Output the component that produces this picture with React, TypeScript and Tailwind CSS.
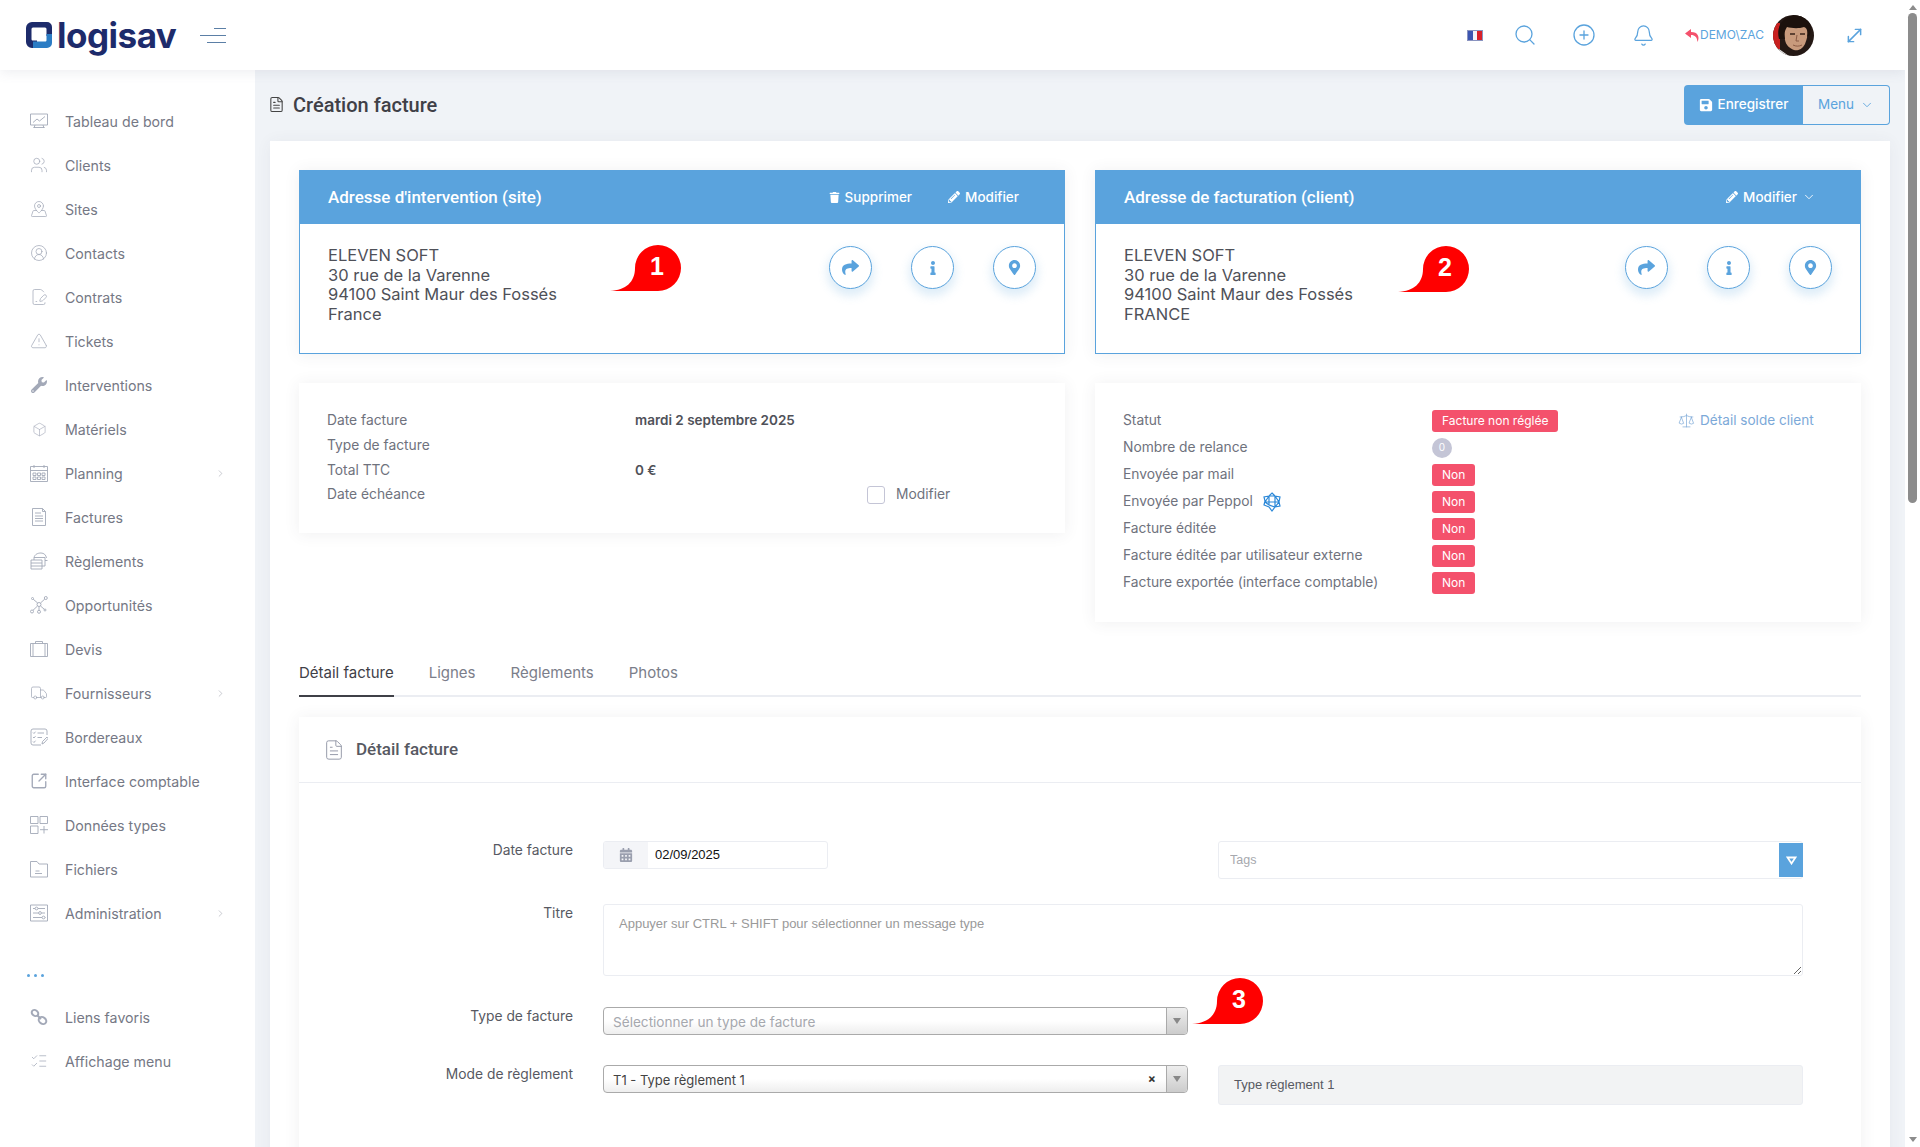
import type { ReactNode } from "react";
import {
  Bell,
  Box,
  ChevronDown,
  ChevronRight,
  CircleUserRound,
  FilePenLine,
  FileText,
  ListChecks,
  MapPinned,
  MoveDiagonal,
  PlusCircle,
  Scale,
  Search,
  SquareArrowOutUpRight,
  TriangleAlert,
  Truck,
  Users,
} from "lucide-react";
import {
  FaCalendarAlt,
  FaInfo,
  FaMapMarkerAlt,
  FaPencilAlt,
  FaSave,
  FaShare,
  FaTrash,
  FaWrench,
} from "react-icons/fa";

const Line = ({ children }: { children: ReactNode }) => (
  <svg width="18" height="18" viewBox="0 0 18 18" fill="none" stroke="#a3a9b8" strokeWidth="0.9">
    {children}
  </svg>
);

const lucideProps = { size: 20, strokeWidth: 1, color: "#a3a9b8" };

const NAV: { label: string; icon: ReactNode; sub?: boolean }[] = [
  {
    label: "Tableau de bord",
    icon: (
      <Line>
        <path d="M.5 2h17v11H.5zM3 10.5l4-3.5 2.500 2L15 4.500M5 13l-1 3M13 13l1 3M3.500 15.500h11" />
      </Line>
    ),
  },
  { label: "Clients", icon: <Users {...lucideProps} /> },
  { label: "Sites", icon: <MapPinned {...lucideProps} /> },
  { label: "Contacts", icon: <CircleUserRound {...lucideProps} /> },
  { label: "Contrats", icon: <FilePenLine {...lucideProps} /> },
  { label: "Tickets", icon: <TriangleAlert {...lucideProps} /> },
  { label: "Interventions", icon: <FaWrench size={16} color="#a3a9b8" /> },
  { label: "Matériels", icon: <Box size={15} strokeWidth={1} color="#a3a9b8" /> },
  {
    label: "Planning",
    sub: true,
    icon: (
      <Line>
        <path d="M.5 2.500h17v15H.5zM.5 6.500h17M4 1v3M14 1v3M3 9h3v2.500H3zM7.500 9h3v2.500h-3zM12 9h3v2.500h-3zM3 13h3v2.500H3zM7.500 13h3v2.500h-3zM12 13h3v2.500h-3z" />
      </Line>
    ),
  },
  {
    label: "Factures",
    icon: (
      <Line>
        <path d="M2.500.5h10l3 3v14h-13zM5 5h6M5 8h8M5 10.500h8M5 13h8M12.500.5v3h3" />
      </Line>
    ),
  },
  {
    label: "Règlements",
    icon: (
      <Line>
        <path d="M1 8h11v9H1zM1 11h11M1 14h11M4 8V5.500h11V14h-3M4 5.500C5 2 8 1 11 1s5 2 5.500 5M15 8.500h2.500" />
      </Line>
    ),
  },
  {
    label: "Opportunités",
    icon: (
      <Line>
        <circle cx="9" cy="8.500" r="2" />
        <circle cx="2" cy="15.500" r="1.500" />
        <circle cx="9" cy="15.800" r="1.500" />
        <circle cx="15.800" cy="2" r="1.500" />
        <circle cx="2.500" cy="2.500" r="1" />
        <circle cx="15" cy="14" r="1" />
        <path d="M7.500 10l-4.500 4.300M9 10.500v3.800M10.500 7l4.300-4M7.700 7L3.200 3.200M10.500 10l3.800 3.300" />
      </Line>
    ),
  },
  {
    label: "Devis",
    icon: (
      <Line>
        <path d="M.5 3.500h17v13H.5zM3 3.500v13M15 3.500v13M5.500 3.500V1.500h7v2" />
      </Line>
    ),
  },
  { label: "Fournisseurs", sub: true, icon: <Truck {...lucideProps} /> },
  {
    label: "Bordereaux",
    icon: (
      <Line>
        <path d="M17 7V3a2 2 0 0 0-2-2H3a2 2 0 0 0-2 2v12a2 2 0 0 0 2 2h8M3 4.500l1 1 1.500-1.800M7.500 5H14M3 9l1 1 1.500-1.800M7.500 9.500H12M3 13.500l1 1 1.500-1.800M12 16l.5-2.500L17 9l1 1.500-4 4.500z" />
      </Line>
    ),
  },
  {
    label: "Interface comptable",
    icon: <SquareArrowOutUpRight size={20} strokeWidth={1.8} color="#a3a9b8" />,
  },
  {
    label: "Données types",
    icon: (
      <Line>
        <path d="M.5.5h7.500v7H.5zM10 .5h7.500v7H10zM.5 10h7.500v7.500H.5zM10 13.700h8M14 10v7.500" />
      </Line>
    ),
  },
  {
    label: "Fichiers",
    icon: (
      <Line>
        <path d="M.5 1.500h6.500l2 2.500h8.500v13H.5zM5.500 11h4M5 13.500h7" />
      </Line>
    ),
  },
  {
    label: "Administration",
    sub: true,
    icon: (
      <Line>
        <path d="M.5 1h17v16H.5zM3 4.500h2M8 4.500h7M3 9h5.500M11.500 9H15M3 13.500h9M15 13.500h.5" />
        <circle cx="6.500" cy="4.500" r="1.400" />
        <circle cx="10" cy="9" r="1.400" />
        <circle cx="13.500" cy="13.500" r="1.400" />
      </Line>
    ),
  },
];

const NAV_BOTTOM = [
  {
    label: "Liens favoris",
    icon: (
      <svg width="18" height="18" viewBox="0 0 18 18" fill="none" stroke="#a3a9b8" strokeWidth="2">
        <ellipse cx="5" cy="5" rx="3.500" ry="2.800" transform="rotate(35 5 5)" />
        <ellipse cx="12.500" cy="12.500" rx="4" ry="3.200" transform="rotate(35 12.500 12.500)" />
        <path d="M7 7l4 4" />
      </svg>
    ),
  },
  { label: "Affichage menu", icon: <ListChecks {...lucideProps} /> },
];

function NavItem({ label, icon, sub }: { label: string; icon: ReactNode; sub?: boolean }) {
  return (
    <div className="flex h-[44px] items-center pl-[30px] pr-[29px]">
      <span className="flex w-[18px] justify-center">{icon}</span>
      <span className="ml-[17px] flex-1 pt-px text-[14.200px] text-[#757885]">{label}</span>
      {sub && <ChevronRight size={11} strokeWidth={1} color="#8a8f9c" />}
    </div>
  );
}

function Logo() {
  return (
    <div className="flex items-center">
      <svg width="28" height="28" viewBox="0 0 28 28">
        <path d="M7 1h15a5 5 0 0 1 5 5v9h-5.500V8a1.500 1.500 0 0 0-1.500-1.500H8A1.500 1.500 0 0 0 6.500 8v10c0 1 .5 1.500 1.500 1.500h4V27H7a6 6 0 0 1-6-6V7a6 6 0 0 1 6-6z" fill="#1d2b6b" />
        <path d="M27 13v9a5 5 0 0 1-5 5H8v-6.500h12c1 0 1.500-.5 1.500-1.500v-6z" fill="#2b7cc4" />
      </svg>
      <span className="ml-[4px] text-[35px] leading-none font-bold tracking-[-0.5px] text-[#1d2b6b]">
        logisav
      </span>
    </div>
  );
}

function Avatar() {
  return (
    <svg width="41" height="41" viewBox="0 0 41 41" className="rounded-full">
      <rect width="41" height="41" fill="#241814" />
      <path d="M0 8h7v26H0z" fill="#c8201f" />
      <path d="M11 14c0-8 19-10 23-2 2 5 0 12-2 17-3 6-8 7-11 6-5-2-8-5-9-10-1-4-1-8-1-11z" fill="#c89a7c" />
      <path d="M6 24C2 8 14 0 24 0c10 0 16 7 13 20l-3 2c1-6 0-9-3-10-6 2-13 1-17 0-2 3-3 6-2 12z" fill="#1c110c" />
      <path d="M17 19h5M27 19h5" stroke="#3a241a" strokeWidth="1.500" />
      <path d="M24 20l-1 6h3M20 30c3 1.500 6 1.500 9 0" stroke="#8a5a44" strokeWidth="1" fill="none" />
      <path d="M6 34l10 7H3z" fill="#e8e8e8" />
    </svg>
  );
}

function Bubble({ n, className }: { n: number; className: string }) {
  return (
    <svg width="71" height="46" viewBox="0 0 71 46" className={className}>
      <path d="M0 46c16-1 25-9 25-23A23 23 0 0 1 48 0a23 23 0 0 1 0 46z" fill="#ff0000" />
      <text x="47" y="30" textAnchor="middle" fill="#fff" fontSize="25" fontWeight="700" fontFamily="Liberation Sans">
        {n}
      </text>
    </svg>
  );
}

function RoundBtn({ children }: { children: ReactNode }) {
  return (
    <div className="flex h-[43px] w-[43px] items-center justify-center rounded-full border border-[#5aa3dd] bg-white text-[#5aa3dd] shadow-[0_5px_10px_2px_rgba(90,163,221,0.2)]">
      {children}
    </div>
  );
}

function AddressCard({
  title,
  actions,
  lines,
}: {
  title: string;
  actions: ReactNode;
  lines: string[];
}) {
  return (
    <div className="shadow-[0_1px_15px_rgba(69,65,78,0.08)]">
      <div className="flex h-[54px] items-center justify-between bg-[#5aa3dd] pl-[29px] pr-[46px] text-white">
        <span className="pt-px font-[family-name:Roboto,sans-serif] text-[17px] font-medium">{title}</span>
        {actions}
      </div>
      <div className="flex h-[130px] justify-between border border-t-0 border-[#5aa3dd] bg-white pl-[28px] pr-[28px] pt-[22px]">
        <div className="text-[16.500px] leading-[19.500px] text-[#4f5159]">
          {lines.map((l) => (
            <div key={l}>{l}</div>
          ))}
        </div>
        <div className="flex gap-[39px]">
          <RoundBtn>
            <FaShare size={17} />
          </RoundBtn>
          <RoundBtn>
            <FaInfo size={14} />
          </RoundBtn>
          <RoundBtn>
            <FaMapMarkerAlt size={15} />
          </RoundBtn>
        </div>
      </div>
    </div>
  );
}

const Action = ({ icon, label }: { icon: ReactNode; label: string }) => (
  <span className="flex items-center gap-[5px] text-[13.500px] font-medium">
    {icon}
    {label}
  </span>
);

function Badge({ children }: { children: ReactNode }) {
  return (
    <span className="flex h-[22px] items-center rounded-[3px] bg-[#f4516c] px-[10px] text-[12px] text-white">
      {children}
    </span>
  );
}

function StatusRow({ label, extra, badge }: { label: string; extra?: ReactNode; badge: ReactNode }) {
  return (
    <div className="flex h-[27px] items-center">
      <span className="flex w-[309px] items-center gap-[9px] text-[13.800px] text-[#6f727d]">
        {label}
        {extra}
      </span>
      {badge}
    </div>
  );
}

function SelectBox({ children, clear }: { children: ReactNode; clear?: boolean }) {
  return (
    <div className="flex h-[28px] w-[585px] items-center rounded-[4px] border border-[#aaaaaa] bg-gradient-to-b from-white from-50% to-[#eeeeee]">
      <span className="flex-1 pl-[9px]">{children}</span>
      {clear && <span className="mr-[10px] text-[12px] font-bold text-[#333]">×</span>}
      <span className="flex h-full w-[21px] items-center justify-center rounded-r-[4px] border-l border-[#aaaaaa] bg-gradient-to-b from-[#eeeeee] to-[#cccccc]">
        <span className="h-0 w-0 border-x-[4px] border-t-[6px] border-x-transparent border-t-[#888888]" />
      </span>
    </div>
  );
}

const FormLabel = ({ children }: { children: ReactNode }) => (
  <label className="-mt-px mr-[30px] w-[274px] shrink-0 text-right text-[13.800px] leading-[20px] text-[#575962]">
    {children}
  </label>
);

export default function App() {
  return (
    <div className="flex h-[1147px] w-full overflow-hidden bg-[#f0f3f7] font-[family-name:Inter,sans-serif]">
      <div className="flex min-w-0 flex-1 flex-col">
        <header className="relative z-10 flex h-[70px] shrink-0 items-center bg-white pl-[25px] pr-[40px] shadow-[0_2px_12px_rgba(100,110,130,0.12)]">
          <Logo />
          <div className="ml-[24px] flex w-[26px] flex-col items-end gap-[6px]">
            <span className="h-px w-[12px] bg-[#5b7fa6]" />
            <span className="h-px w-[26px] bg-[#5b7fa6]" />
            <span className="h-px w-[19px] bg-[#5b7fa6]" />
          </div>
          <div className="ml-auto flex items-center text-[#5aa3dd]">
            <div className="flex h-[11px] w-[16px] border border-[#8a94c0]">
              <span className="flex-1 bg-[#3c55b0]" />
              <span className="flex-1 bg-[#f4f4f8]" />
              <span className="flex-1 bg-[#d8202a]" />
            </div>
            <Search size={24} strokeWidth={1.300} className="ml-[30px]" />
            <PlusCircle size={24} strokeWidth={1.300} className="ml-[35px]" />
            <Bell size={23} strokeWidth={1.300} className="ml-[36px]" />
            <svg width="15" height="13" viewBox="0 0 15 13" className="ml-[30px]">
              <path d="M6 0L0 4.500 6 9V6c4 0 6 2 6.500 7C15 8 13 3 6 3z" fill="#f4516c" />
            </svg>
            <span className="text-[12px]">DEMO\ZAC</span>
            <span className="ml-[9px] flex">
              <Avatar />
            </span>
            <MoveDiagonal size={21} strokeWidth={1.700} className="ml-[30px]" />
          </div>
        </header>

        <div className="flex min-h-0 flex-1">
          <aside className="w-[255px] shrink-0 bg-white pt-[29px]">
            {NAV.map((n) => (
              <NavItem key={n.label} {...n} />
            ))}
            <div className="flex h-[60px] items-start gap-[4px] pl-[27px] pt-[39px]">
              <span className="h-[3px] w-[3px] rounded-full bg-[#5aa3dd]" />
              <span className="h-[3px] w-[3px] rounded-full bg-[#5aa3dd]" />
              <span className="h-[3px] w-[3px] rounded-full bg-[#5aa3dd]" />
            </div>
            {NAV_BOTTOM.map((n) => (
              <NavItem key={n.label} {...n} />
            ))}
          </aside>

          <main className="flex min-w-0 flex-1 flex-col pl-[15px] pr-[15px]">
            <div className="flex h-[71px] shrink-0 items-center justify-between pb-[2px]">
              <div className="flex items-center gap-[8px]">
                <FileText size={17} strokeWidth={1.500} color="#444" className="-ml-[2px]" />
                <h1 className="font-[family-name:Roboto,sans-serif] text-[20px] font-medium text-[#3f4047]">
                  Création facture
                </h1>
              </div>
              <div className="flex h-[40px] text-[13.500px]">
                <button className="flex w-[119px] items-center justify-center gap-[5px] rounded-l-[4px] bg-[#5aa3dd] font-medium text-white">
                  <FaSave size={14} />
                  Enregistrer
                </button>
                <button className="flex w-[87px] items-center justify-center gap-[6px] rounded-r-[4px] border border-l-0 border-[#5aa3dd] text-[#5aa3dd]">
                  Menu
                  <ChevronDown size={14} strokeWidth={1.500} />
                </button>
              </div>
            </div>

            <section className="relative flex-1 bg-white px-[29px] pt-[29px] shadow-[0_1px_15px_rgba(69,65,78,0.06)]">
              <div className="grid grid-cols-2 gap-x-[30px]">
                <AddressCard
                  title="Adresse d'intervention (site)"
                  actions={
                    <div className="flex gap-[36px]">
                      <Action icon={<FaTrash size={11} />} label="Supprimer" />
                      <Action icon={<FaPencilAlt size={12} />} label="Modifier" />
                    </div>
                  }
                  lines={["ELEVEN SOFT", "30 rue de la Varenne", "94100 Saint Maur des Fossés", "France"]}
                />
                <AddressCard
                  title="Adresse de facturation (client)"
                  actions={
                    <span className="-mr-[1px] flex items-center gap-[5px]">
                      <Action icon={<FaPencilAlt size={12} />} label="Modifier" />
                      <ChevronDown size={14} strokeWidth={1.500} />
                    </span>
                  }
                  lines={["ELEVEN SOFT", "30 rue de la Varenne", "94100 Saint Maur des Fossés", "FRANCE"]}
                />

                <div className="mt-[29px] h-[150px] self-start pl-[28px] pt-[25px] text-[13.800px] text-[#6f727d] shadow-[0_1px_15px_rgba(69,65,78,0.08)]">
                  {[
                    ["Date facture", "mardi 2 septembre 2025"],
                    ["Type de facture", ""],
                    ["Total TTC", "0 €"],
                  ].map(([l, v]) => (
                    <div key={l} className="flex h-[24.800px] items-center">
                      <span className="w-[308px]">{l}</span>
                      <span className="text-[13.500px] font-semibold text-[#4f5159]">{v}</span>
                    </div>
                  ))}
                  <div className="flex h-[24.800px] items-center">
                    <span className="w-[540px]">Date échéance</span>
                    <span className="h-[18px] w-[18px] rounded-[3px] border border-[#c4c5d6]" />
                    <span className="ml-[11px]">Modifier</span>
                  </div>
                </div>

                <div className="relative mt-[29px] h-[239px] pl-[28px] pt-[24px] shadow-[0_1px_15px_rgba(69,65,78,0.08)]">
                  <StatusRow label="Statut" badge={<Badge>Facture non réglée</Badge>} />
                  <StatusRow
                    label="Nombre de relance"
                    badge={
                      <span className="flex h-[20px] w-[20px] items-center justify-center rounded-full bg-[#c4c5d6] text-[10px] text-white">
                        0
                      </span>
                    }
                  />
                  <StatusRow label="Envoyée par mail" badge={<Badge>Non</Badge>} />
                  <StatusRow
                    label="Envoyée par Peppol"
                    extra={
                      <svg width="20" height="20" viewBox="0 0 20 20" fill="none" stroke="#2b88d8" strokeWidth="1.200">
                        <path d="M10 1l3 3 5 1-1 5 1 4-5 1-3 4-3-4-5-2 1-4-1-4 5-1zM7 4l6 0 4 6-4 5-6-2-4-3zM7 4l0 9M13 4l0 11M3 10l14 0" />
                      </svg>
                    }
                    badge={<Badge>Non</Badge>}
                  />
                  <StatusRow label="Facture éditée" badge={<Badge>Non</Badge>} />
                  <StatusRow label="Facture éditée par utilisateur externe" badge={<Badge>Non</Badge>} />
                  <StatusRow label="Facture exportée (interface comptable)" badge={<Badge>Non</Badge>} />
                  <div className="absolute left-[583px] top-[27px] flex items-center gap-[5px] text-[13.600px] text-[#7ca9d8]">
                    <Scale size={17} strokeWidth={1} />
                    Détail solde client
                  </div>
                </div>
              </div>

              <nav className="-mt-[1px] flex h-[76px] items-end border-b-2 border-[#ebedf2] text-[15px] text-[#7b7e8a]">
                <span className="-mb-[2px] flex h-[35px] items-start border-b-2 border-[#3f4047] text-[#3f4047]">
                  Détail facture
                </span>
                <span className="ml-[35px] h-[33px]">Lignes</span>
                <span className="ml-[35px] h-[33px]">Règlements</span>
                <span className="ml-[35px] h-[33px]">Photos</span>
              </nav>

              <div className="mt-[20px] h-[700px] shadow-[0_1px_15px_rgba(69,65,78,0.08)]">
                <div className="flex h-[66px] items-center gap-[11px] border-b border-[#ebedf2] pl-[24px]">
                  <FileText size={22} strokeWidth={1} color="#8e93a3" />
                  <h2 className="font-[family-name:Roboto,sans-serif] text-[17px] font-medium text-[#575962]">
                    Détail facture
                  </h2>
                </div>

                <div className="pt-[58px]">
                  <div className="flex items-start">
                    <FormLabel>Date facture</FormLabel>
                    <div className="flex h-[28px] w-[225px] overflow-hidden rounded-[3px] border border-[#ebedf2]">
                      <span className="flex w-[44px] items-center justify-center bg-[#f4f5f8]">
                        <FaCalendarAlt size={14} color="#9a9fae" />
                      </span>
                      <input
                        readOnly
                        value="02/09/2025"
                        className="min-w-0 flex-1 pl-[7px] font-[family-name:Liberation_Sans,sans-serif] text-[13px] text-[#111] outline-none"
                      />
                    </div>
                    <div className="ml-[390px] flex h-[38px] w-[585px] items-center rounded-[3px] border border-[#ebedf2] pl-[11px]">
                      <input
                        placeholder="Tags"
                        className="min-w-0 flex-1 font-[family-name:Liberation_Sans,sans-serif] text-[12.500px] outline-none placeholder:text-[#a6a8ae]"
                      />
                      <span className="-mr-px flex h-[34px] w-[24px] items-center justify-center bg-[#5aa3dd]">
                        <svg width="11" height="9" viewBox="0 0 11 9" fill="none" stroke="#fff" strokeWidth="1.800">
                          <path d="M1.500 1.500h8l-4 6z" />
                        </svg>
                      </span>
                    </div>
                  </div>

                  <div className="mt-[25px] flex items-start">
                    <FormLabel>Titre</FormLabel>
                    <textarea
                      placeholder="Appuyer sur CTRL + SHIFT pour sélectionner un message type"
                      className="h-[72px] w-[1200px] rounded-[3px] border border-[#ebedf2] px-[15px] py-[9px] font-[family-name:Liberation_Sans,sans-serif] text-[13px] outline-none placeholder:text-[#9a9a9a]"
                    />
                  </div>

                  <div className="mt-[31px] flex items-start">
                    <FormLabel>Type de facture</FormLabel>
                    <SelectBox>
                      <span className="text-[13.600px] text-[#a6a8ae]">Sélectionner un type de facture</span>
                    </SelectBox>
                  </div>

                  <div className="mt-[30px] flex items-start">
                    <FormLabel>Mode de règlement</FormLabel>
                    <SelectBox clear>
                      <span className="text-[13px] text-[#444]">T1 - Type règlement 1</span>
                    </SelectBox>
                    <div className="ml-[30px] flex h-[40px] w-[585px] items-center rounded-[3px] border border-[#ebedf2] bg-[#f2f3f4] pl-[15px] font-[family-name:Liberation_Sans,sans-serif] text-[13px] text-[#575962]">
                      Type règlement 1
                    </div>
                  </div>
                </div>
              </div>

              <Bubble n={1} className="absolute left-[340px] top-[104px]" />
              <Bubble n={2} className="absolute left-[1128px] top-[105px]" />
              <Bubble n={3} className="absolute left-[922px] top-[837px]" />
            </section>
          </main>
        </div>
      </div>

      <div className="relative z-20 flex w-[15px] shrink-0 flex-col items-center bg-white">
        <span className="mt-[5px] h-0 w-0 border-x-[4px] border-b-[5px] border-x-transparent border-b-[#8c8c8c]" />
        <span className="mt-[3px] h-[490px] w-[9px] rounded-full bg-[#8c8c8c]" />
        <span className="mb-[5px] mt-auto h-0 w-0 border-x-[4px] border-t-[5px] border-x-transparent border-t-[#8c8c8c]" />
      </div>
    </div>
  );
}
